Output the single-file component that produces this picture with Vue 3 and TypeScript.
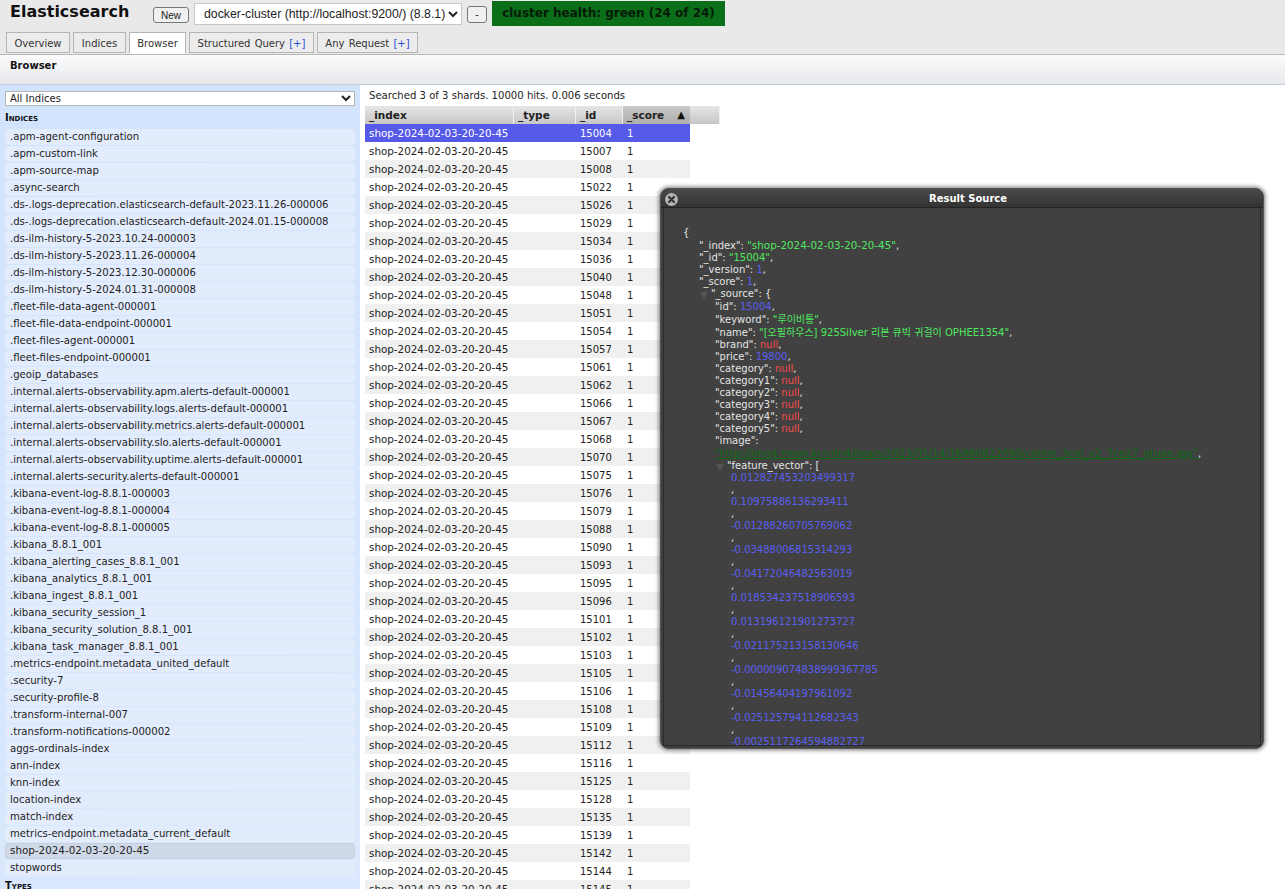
<script setup lang="ts">
const tabs = [
  { label: 'Overview', cls: 't-overview' },
  { label: 'Indices', cls: 't-indices' },
  { label: 'Browser', cls: 't-browser', active: true },
  { label: 'Structured Query', cls: 't-query', plus: true },
  { label: 'Any Request', cls: 't-any', plus: true },
]
const indices = [
  '.apm-agent-configuration', '.apm-custom-link', '.apm-source-map', '.async-search',
  '.ds-.logs-deprecation.elasticsearch-default-2023.11.26-000006',
  '.ds-.logs-deprecation.elasticsearch-default-2024.01.15-000008',
  '.ds-ilm-history-5-2023.10.24-000003', '.ds-ilm-history-5-2023.11.26-000004',
  '.ds-ilm-history-5-2023.12.30-000006', '.ds-ilm-history-5-2024.01.31-000008',
  '.fleet-file-data-agent-000001', '.fleet-file-data-endpoint-000001',
  '.fleet-files-agent-000001', '.fleet-files-endpoint-000001', '.geoip_databases',
  '.internal.alerts-observability.apm.alerts-default-000001',
  '.internal.alerts-observability.logs.alerts-default-000001',
  '.internal.alerts-observability.metrics.alerts-default-000001',
  '.internal.alerts-observability.slo.alerts-default-000001',
  '.internal.alerts-observability.uptime.alerts-default-000001',
  '.internal.alerts-security.alerts-default-000001',
  '.kibana-event-log-8.8.1-000003', '.kibana-event-log-8.8.1-000004',
  '.kibana-event-log-8.8.1-000005', '.kibana_8.8.1_001',
  '.kibana_alerting_cases_8.8.1_001', '.kibana_analytics_8.8.1_001',
  '.kibana_ingest_8.8.1_001', '.kibana_security_session_1',
  '.kibana_security_solution_8.8.1_001', '.kibana_task_manager_8.8.1_001',
  '.metrics-endpoint.metadata_united_default', '.security-7', '.security-profile-8',
  '.transform-internal-007', '.transform-notifications-000002', 'aggs-ordinals-index',
  'ann-index', 'knn-index', 'location-index', 'match-index',
  'metrics-endpoint.metadata_current_default', 'shop-2024-02-03-20-20-45', 'stopwords',
]
const ids = [15004, 15007, 15008, 15022, 15026, 15029, 15034, 15036, 15040, 15048, 15051, 15054, 15057, 15061, 15062, 15066, 15067, 15068, 15070, 15075, 15076, 15079, 15088, 15090, 15093, 15095, 15096, 15101, 15102, 15103, 15105, 15106, 15108, 15109, 15112, 15116, 15125, 15128, 15135, 15139, 15142, 15144, 15145]
const nullFields = ['category', 'category1', 'category2', 'category3', 'category4', 'category5']
const vector = [
  '0.012827453203499317', '0.10975886136293411', '-0.01288260705769062', '-0.03488006815314293',
  '-0.04172046482563019', '0.018534237518906593', '0.013196121901273727', '-0.021175213158130646',
  '-0.000009074838999367785', '-0.01456404197961092', '-0.025125794112682343', '-0.0025117264594882727',
]
</script>

<template>
  <div class="page">
    <header class="top">
      <div class="top-row">
        <h1 class="brand">Elasticsearch</h1>
        <button class="btn btn-new">New</button>
        <select class="cluster">
          <option>docker-cluster (http://localhost:9200/) (8.8.1)</option>
        </select>
        <button class="btn btn-minus">-</button>
        <div class="health">cluster health: green (24 of 24)</div>
      </div>
      <nav class="tabs">
        <div v-for="t in tabs" :key="t.label" class="tab" :class="[t.cls, { active: t.active }]">
          {{ t.label }}<span v-if="t.plus" class="plus"> [+]</span>
        </div>
      </nav>
    </header>

    <div class="subbar"><b>Browser</b></div>

    <main class="body">
      <aside class="side">
        <select class="side-select"><option>All Indices</option></select>
        <h3 class="side-head">Indices</h3>
        <ul class="list">
          <li v-for="n in indices" :key="n" class="item" :class="{ sel: n === 'shop-2024-02-03-20-20-45' }">{{ n }}</li>
        </ul>
        <h3 class="side-head types">Types</h3>
      </aside>

      <section class="results">
        <p class="summary">Searched 3 of 3 shards. 10000 hits. 0.006 seconds</p>
        <div class="thead">
          <div class="th c1">_index</div>
          <div class="th c2">_type</div>
          <div class="th c3">_id</div>
          <div class="th c4 sorted"><span>_score</span><span class="arrow">▲</span></div>
          <div class="th c5"></div>
        </div>
        <div v-for="(id, i) in ids" :key="id" class="tr" :class="{ first: i === 0, odd: i % 2 === 0 }">
          <div class="td c1 shop">shop-2024-02-03-20-20-45</div>
          <div class="td c2"></div>
          <div class="td c3 num">{{ id }}</div>
          <div class="td c4 num">1</div>
        </div>
      </section>
    </main>

    <div class="dialog">
      <div class="dialog-title">
        <span class="close">
          <svg width="13" height="13" viewBox="0 0 13 13">
            <circle cx="6.5" cy="6.5" r="6.5" fill="#b4b4b4" />
            <path d="M4 4l5 5M9 4l-5 5" stroke="#333" stroke-width="2.2" stroke-linecap="round" />
          </svg>
        </span>
        <b>Result Source</b>
      </div>
      <div class="dialog-body">
        <div>{</div>
        <div class="l1">
          <div>"_index": <span class="s wide">"shop-2024-02-03-20-20-45"</span>,</div>
          <div>"_id": <span class="s">"15004"</span>,</div>
          <div>"_version": <span class="n">1</span>,</div>
          <div>"_score": <span class="n">1</span>,</div>
          <div class="tree"><i class="tri"></i>"_source": {</div>
          <div class="l2">
            <div>"id": <span class="n">15004</span>,</div>
            <div class="tall">"keyword": <span class="s">"루이비통"</span>,</div>
            <div class="tall">"name": <span class="s">"[오필하우스] 925Silver 리본 큐빅 귀걸이 OPHEE1354"</span>,</div>
            <div>"brand": <span class="x">null</span>,</div>
            <div>"price": <span class="n">19800</span>,</div>
            <div v-for="f in nullFields" :key="f">"{{ f }}": <span class="x">null</span>,</div>
            <div>"image":</div>
            <div><span class="link">"http://img4.tmon.kr/cdn4/deals/2023/01/14/16880822090/catlist_3col_v2_7ce27_qtuan.jpg"</span>,</div>
            <div class="tree2"><i class="tri"></i>"feature_vector": [</div>
            <div class="vec">
              <template v-for="(v, i) in vector" :key="i">
                <div class="n">{{ v }}</div>
                <div v-if="i < vector.length - 1">,</div>
              </template>
            </div>
          </div>
        </div>
      </div>
    </div>
  </div>
</template>

<style>
html, body { margin: 0; height: 100%; overflow: hidden; background: #fff; }
</style>

<style scoped>
.page {
  position: relative;
  width: 1285px;
  height: 889px;
  overflow: hidden;
  font-family: "DejaVu Sans", Verdana, "Noto Sans CJK KR", sans-serif;
  font-size: 10.1px;
  color: #222;
}
.top { height: 54px; background: #e9e9e9; border-bottom: 1px solid #b9b9b9; box-sizing: content-box; }
.top-row { display: flex; align-items: flex-start; height: 32px; }
.brand { margin: 1px 0 0 10px; width: 143px; font-size: 16px; line-height: 21px; font-weight: 700; color: #111; }
.btn {
  padding: 0; margin: 7px 0 0; height: 16px; box-sizing: border-box;
  background: #f0f0f0; border: 1px solid #777; border-radius: 3px;
  font: 10px "Liberation Sans", Arial, sans-serif; color: #222;
}
.btn-new { width: 36px; }
.cluster {
  margin: 3px 0 0 5px; width: 268px; height: 22px; box-sizing: border-box;
  background: #fff; border: 1px solid #c8c8c8; padding: 0 0 0 5px;
  font: 12.3px "Liberation Sans", Arial, sans-serif; color: #222;
}
.btn-minus { width: 20px; margin-left: 5px; margin-top: 6px; height: 17px; }
.health {
  margin: 1px 0 0 5px; width: 233px; height: 25px; box-sizing: border-box;
  background: #0b6e19; color: #061a08; text-align: center;
  font-weight: 700; font-size: 12px; line-height: 25px;
}
.tabs { display: flex; gap: 3px; padding-left: 6px; height: 22px; font-size: 10px; word-spacing: 1px; }
.tab {
  box-sizing: border-box; height: 21px; padding-top: 1px; line-height: 19px; text-align: center;
  background: #ececec; border: 1px solid #b5b5b5; color: #333;
  white-space: nowrap;
}
.t-overview { width: 64px; }
.t-indices { width: 53px; }
.t-browser { width: 57px; }
.t-query { width: 125px; }
.t-any { width: 101px; }
.tab.active { background: #fff; border-color: #b5b5b5 #b5b5b5 #fff; height: 22px; position: relative; z-index: 1; }
.plus { color: #2b4fd8; }
.subbar {
  height: 30px; box-sizing: border-box; padding: 5px 10px 0; font-size: 10px;
  background: linear-gradient(#fbfbfc, #e6e8eb); border-bottom: 1px solid #c3ccd8; color: #111;
}
.body { display: flex; height: 804px; }
.side {
  width: 360px; flex: none; box-sizing: border-box; padding: 6px 5px 0;
  background: linear-gradient(160deg, #d2e3fd 0%, #d7e6fd 60%, #dbe8fd 100%);
  overflow: hidden;
}
.side-select {
  display: block; width: 350px; height: 15px; box-sizing: border-box; margin: 0;
  padding: 0; background: #fff; border: 1px solid #b4b4b4;
  font: 10px "DejaVu Sans", sans-serif; color: #222;
}
.side-head {
  margin: 6px 0 5px; font-size: 10px; line-height: 12px; font-weight: 700;
  font-variant: small-caps; color: #111; font-family: "DejaVu Sans", sans-serif;
}
.side-head.types { margin-top: 4px; }
.list { list-style: none; margin: 0; padding: 0; display: flex; flex-direction: column; gap: 1px; }
.item {
  height: 16px; line-height: 16px; padding-left: 5px; border-radius: 4px;
  background: #e2ecfd; white-space: nowrap; color: #222;
}
.item.sel { background: #d0d9e8; box-shadow: inset 0 0 0 1px #c6cfdf; font-size: 10.35px; line-height: 15px; }
.results { flex: 1; min-width: 0; padding: 1px 0 0 5px; }
.summary { margin: 0; height: 20px; line-height: 19px; padding-left: 4px; color: #222; }
.thead { display: flex; height: 18px; font-size: 10.5px; }
.th {
  box-sizing: border-box; padding-left: 4px; line-height: 18px; font-weight: 700; color: #222;
  background: linear-gradient(#e6e6e6, #c6c6c6); border-right: 1px solid #f0f0f0;
}
.th.sorted { background: linear-gradient(#c9c9c9, #adadad); display: flex; justify-content: space-between; padding-right: 5px; border-right: 0; }
.arrow { font-size: 10px; color: #111; }
.c1 { width: 149px; flex: none; }
.c2 { width: 62px; flex: none; }
.c3 { width: 47px; flex: none; }
.c4 { width: 67px; flex: none; }
.c5 { width: 30px; flex: none; border-right: 1px solid #f0f0f0; }
.tr { display: flex; height: 18px; width: 325px; font-size: 10px; }
.tr.odd { background: #f0f0f0; }
.tr.first { background: #565ae8; color: #fff; }
.td { box-sizing: border-box; padding-left: 4px; line-height: 18px; white-space: nowrap; }
.num { padding-top: 1px; }
.shop { font-size: 10.35px; }
.dialog {
  position: absolute; left: 660px; top: 188px; width: 604px; height: 561px; box-sizing: border-box;
  background: rgba(42, 42, 42, 0.89); border: 1px solid #555; border-radius: 8px;
  box-shadow: 0 0 4px 1px rgba(0, 0, 0, 0.55); overflow: hidden; padding: 0 2px 2px;
  display: flex; flex-direction: column; color: #e4e4e4; font-size: 10px;
}
.dialog-title {
  position: relative; height: 18px; flex: none; text-align: center; line-height: 19px; color: #fff;
  border-bottom: 1px solid #222; background: linear-gradient(#4a4a4a, #333);
  margin: 0 -2px; padding-left: 12px;
}
.close { position: absolute; left: 4px; top: 4px; line-height: 0; }
.dialog-body {
  flex: 1; min-height: 0; overflow: hidden; padding: 19px 0 0 19px; line-height: 12px;
  border: 1px solid #2a2a2a; border-top: 0;
}
.l1 { padding-left: 16px; }
.tree { position: relative; padding-left: 12px; }
.tree2 { position: relative; padding-left: 12px; }
.tri {
  position: absolute; left: 1px; top: 4px; width: 0; height: 0;
  border-left: 4px solid transparent; border-right: 4px solid transparent; border-top: 7px solid #555;
}
.l2 { padding-left: 16px; margin-top: 1px; }
.tall { height: 13px; line-height: 13px; }
.vec { padding-left: 16px; }
.s { color: #4fe85f; }
.wide { font-size: 10.35px; }
.n { color: #5a5ff0; }
.x { color: #f44b4b; }
.link { color: #0a6c12; text-decoration: underline; font-size: 10.4px; }
</style>
